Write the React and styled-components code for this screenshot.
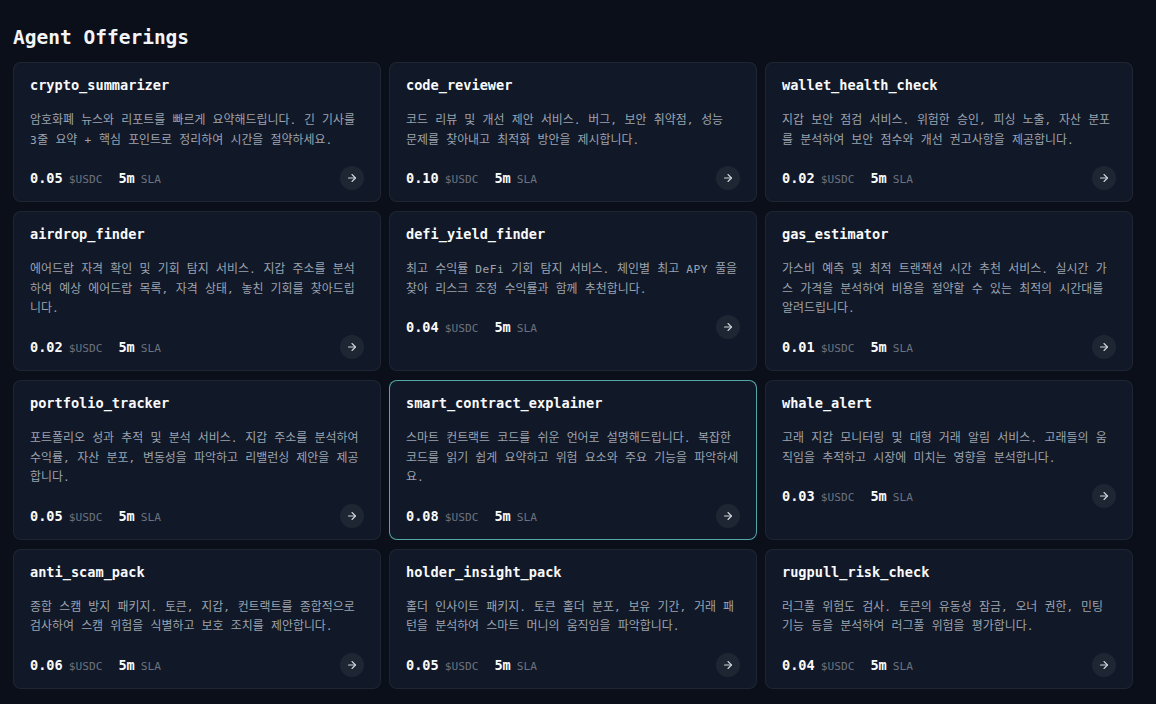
import styled, { createGlobalStyle } from 'styled-components';
import { ArrowRight } from 'lucide-react';

const offerings = [
  { name: 'crypto_summarizer', desc: '암호화폐 뉴스와 리포트를 빠르게 요약해드립니다. 긴 기사를 3줄 요약 + 핵심 포인트로 정리하여 시간을 절약하세요.', price: '0.05' },
  { name: 'code_reviewer', desc: '코드 리뷰 및 개선 제안 서비스. 버그, 보안 취약점, 성능 문제를 찾아내고 최적화 방안을 제시합니다.', price: '0.10' },
  { name: 'wallet_health_check', desc: '지갑 보안 점검 서비스. 위험한 승인, 피싱 노출, 자산 분포를 분석하여 보안 점수와 개선 권고사항을 제공합니다.', price: '0.02' },
  { name: 'airdrop_finder', desc: '에어드랍 자격 확인 및 기회 탐지 서비스. 지갑 주소를 분석하여 예상 에어드랍 목록, 자격 상태, 놓친 기회를 찾아드립니다.', price: '0.02' },
  { name: 'defi_yield_finder', desc: '최고 수익률 DeFi 기회 탐지 서비스. 체인별 최고 APY 풀을 찾아 리스크 조정 수익률과 함께 추천합니다.', price: '0.04' },
  { name: 'gas_estimator', desc: '가스비 예측 및 최적 트랜잭션 시간 추천 서비스. 실시간 가스 가격을 분석하여 비용을 절약할 수 있는 최적의 시간대를 알려드립니다.', price: '0.01' },
  { name: 'portfolio_tracker', desc: '포트폴리오 성과 추적 및 분석 서비스. 지갑 주소를 분석하여 수익률, 자산 분포, 변동성을 파악하고 리밸런싱 제안을 제공합니다.', price: '0.05' },
  { name: 'smart_contract_explainer', desc: '스마트 컨트랙트 코드를 쉬운 언어로 설명해드립니다. 복잡한 코드를 읽기 쉽게 요약하고 위험 요소와 주요 기능을 파악하세요.', price: '0.08', active: true },
  { name: 'whale_alert', desc: '고래 지갑 모니터링 및 대형 거래 알림 서비스. 고래들의 움직임을 추적하고 시장에 미치는 영향을 분석합니다.', price: '0.03' },
  { name: 'anti_scam_pack', desc: '종합 스캠 방지 패키지. 토큰, 지갑, 컨트랙트를 종합적으로 검사하여 스캠 위험을 식별하고 보호 조치를 제안합니다.', price: '0.06' },
  { name: 'holder_insight_pack', desc: '홀더 인사이트 패키지. 토큰 홀더 분포, 보유 기간, 거래 패턴을 분석하여 스마트 머니의 움직임을 파악합니다.', price: '0.05' },
  { name: 'rugpull_risk_check', desc: '러그풀 위험도 검사. 토큰의 유동성 잠금, 오너 권한, 민팅 기능 등을 분석하여 러그풀 위험을 평가합니다.', price: '0.04' },
];

const GlobalStyle = createGlobalStyle`
  body {
    margin: 0;
    background: #0b0f19;
    font-family: "DejaVu Sans Mono", "Noto Sans CJK KR", monospace;
  }
`;

const Page = styled.div`
  min-height: 704px;
  padding: 26px 23px 16px 13px;
  box-sizing: border-box;
`;

const Title = styled.h2`
  margin: 0 0 13px;
  font-size: 19.5px;
  font-weight: 700;
  color: #f3f4f6;
`;

const Grid = styled.div`
  display: grid;
  grid-template-columns: repeat(3, 1fr);
  gap: 9px 8px;
`;

const Card = styled.div`
  background: #111827;
  border: 1px solid ${(p) => (p.$active ? 'rgba(100, 205, 200, 0.8)' : 'rgba(255, 255, 255, 0.06)')};
  border-radius: 8px;
  padding: 14px 16px 11px;
`;

const Name = styled.div`
  font-size: 13.6px;
  font-weight: 700;
  color: #f9fafb;
`;

const Desc = styled.p`
  margin: 18px 0 16px;
  font-size: 11.2px;
  line-height: 19.6px;
  letter-spacing: 0.46px;
  color: #9ca3af;
`;

// hangul runs: the CJK fallback is narrower than a full-width mono cell
const Ko = styled.span`
  font-size: 11.95px;
  line-height: 1;
  letter-spacing: 0;
`;

const Footer = styled.div`
  display: flex;
  align-items: center;
  gap: 16px;
`;

const Stat = styled.div`
  display: flex;
  align-items: baseline;
  gap: 6px;
`;

const Value = styled.span`
  font-size: 13.6px;
  font-weight: 700;
  color: #f9fafb;
`;

const Unit = styled.span`
  font-size: 11.2px;
  color: #6b7280;
`;

const Go = styled.button`
  margin-left: auto;
  width: 24px;
  height: 24px;
  padding: 0;
  border: none;
  border-radius: 50%;
  background: #1f2633;
  color: #d1d5db;
  display: flex;
  align-items: center;
  justify-content: center;
`;

const splitHangul = (text) =>
  text.split(/([\uAC00-\uD7A3]+)/).map((part, i) =>
    /[\uAC00-\uD7A3]/.test(part) ? <Ko key={i}>{part}</Ko> : part
  );

export default function App() {
  return (
    <Page>
      <GlobalStyle />
      <Title>Agent Offerings</Title>
      <Grid>
        {offerings.map((o) => (
          <Card key={o.name} $active={o.active}>
            <Name>{o.name}</Name>
            <Desc>{splitHangul(o.desc)}</Desc>
            <Footer>
              <Stat>
                <Value>{o.price}</Value>
                <Unit>$USDC</Unit>
              </Stat>
              <Stat>
                <Value>5m</Value>
                <Unit>SLA</Unit>
              </Stat>
              <Go>
                <ArrowRight size={12} strokeWidth={2.2} />
              </Go>
            </Footer>
          </Card>
        ))}
      </Grid>
    </Page>
  );
}
